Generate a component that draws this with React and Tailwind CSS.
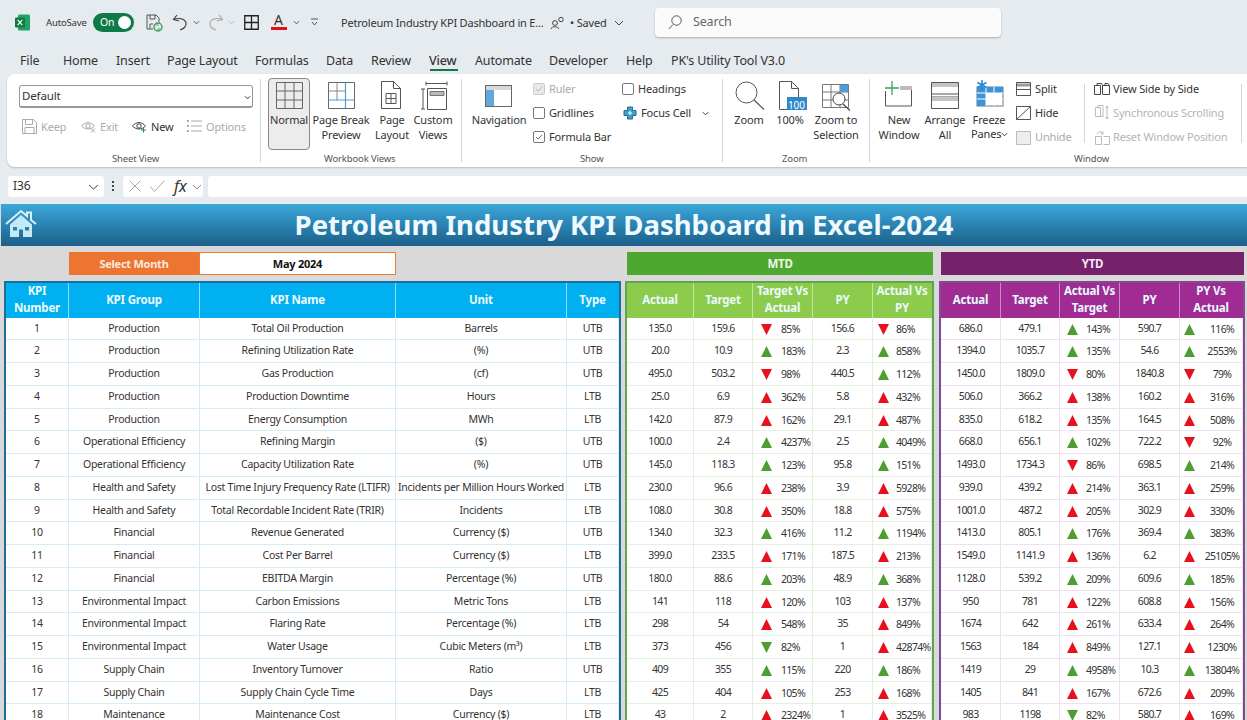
import React from "react";

const kpis = [
  [1,"Production","Total Oil Production","Barrels","UTB"],
  [2,"Production","Refining Utilization Rate","(%)","UTB"],
  [3,"Production","Gas Production","(cf)","UTB"],
  [4,"Production","Production Downtime","Hours","LTB"],
  [5,"Production","Energy Consumption","MWh","LTB"],
  [6,"Operational Efficiency","Refining Margin","($)","UTB"],
  [7,"Operational Efficiency","Capacity Utilization Rate","(%)","UTB"],
  [8,"Health and Safety","Lost Time Injury Frequency Rate (LTIFR)","Incidents per Million Hours Worked","LTB"],
  [9,"Health and Safety","Total Recordable Incident Rate (TRIR)","Incidents","LTB"],
  [10,"Financial","Revenue Generated","Currency ($)","UTB"],
  [11,"Financial","Cost Per Barrel","Currency ($)","LTB"],
  [12,"Financial","EBITDA Margin","Percentage (%)","UTB"],
  [13,"Environmental Impact","Carbon Emissions","Metric Tons","LTB"],
  [14,"Environmental Impact","Flaring Rate","Percentage (%)","LTB"],
  [15,"Environmental Impact","Water Usage","Cubic Meters (m³)","LTB"],
  [16,"Supply Chain","Inventory Turnover","Ratio","UTB"],
  [17,"Supply Chain","Supply Chain Cycle Time","Days","LTB"],
  [18,"Maintenance","Maintenance Cost","Currency ($)","LTB"],
];

const mtd = [
  ["135.0","159.6","d85","156.6","d86"],["20.0","10.9","u183","2.3","u858"],["495.0","503.2","d98","440.5","u112"],
  ["25.0","6.9","r362","5.8","r432"],["142.0","87.9","r162","29.1","r487"],["100.0","2.4","u4237","2.5","u4049"],
  ["145.0","118.3","u123","95.8","u151"],["230.0","96.6","r238","3.9","r5928"],["108.0","30.8","r350","18.8","r575"],
  ["134.0","32.3","u416","11.2","u1194"],["399.0","233.5","r171","187.5","r213"],["180.0","88.6","u203","48.9","u368"],
  ["141","118","r120","103","r137"],["298","54","r548","35","r849"],["373","456","g82","1","r42874"],
  ["409","355","u115","220","u186"],["425","404","r105","253","r168"],["43","2","r2324","1","r3525"],
];

const ytd = [
  ["686.0","479.1","u143","590.7","u116"],["1394.0","1035.7","u135","54.6","u2553"],["1450.0","1809.0","d80","1840.8","d79"],
  ["506.0","366.2","r138","160.2","r316"],["835.0","618.2","r135","164.5","r508"],["668.0","656.1","u102","722.2","d92"],
  ["1493.0","1734.3","d86","698.5","u214"],["939.0","439.2","r214","363.1","r259"],["1001.0","487.2","r205","302.9","r330"],
  ["1413.0","805.1","u176","369.4","u383"],["1549.0","1141.9","r136","6.2","r25105"],["1128.0","539.2","u209","609.6","u185"],
  ["950","781","r122","608.8","r156"],["1674","642","r261","633.4","r264"],["1563","184","r849","127.1","r1230"],
  ["1419","29","u4958","10.3","u13804"],["1405","841","r167","672.6","r209"],["983","1198","g82","580.7","r169"],
];

function Arrow({ code, className }) {
  const color = code === "u" || code === "g" ? "#4b9e2f" : "#e8101c";
  const pts = code === "u" || code === "r" ? "0,11 5.5,0 11,11" : "0,0 11,0 5.5,11";
  return (
    <svg viewBox="0 0 11 11" className={"absolute top-[6px] w-[11px] h-[11px] " + className}>
      <polygon points={pts} fill={color} />
    </svg>
  );
}

function Pct({ v, arrow, text, line }) {
  const code = v[0];
  return (
    <div className={"relative h-[22.75px] border-b border-r " + line}>
      <Arrow code={code} className={arrow} />
      <span className={"absolute top-[4px] leading-[14px] whitespace-nowrap " + text}>{v.slice(1)}%</span>
    </div>
  );
}

function Cell({ children, line }) {
  return (
    <div className={"h-[22.75px] flex items-center justify-center whitespace-nowrap border-b border-r " + line}>{children}</div>
  );
}

function Head({ children, line }) {
  return (
    <div className={"h-[34.5px] pb-[2px] flex items-center justify-center text-center leading-[17px] font-bold text-[11.5px] tracking-[-0.2px] text-[#eafaff] border-r " + line}>{children}</div>
  );
}

function Lbl({ className, children }) {
  return <div className={"absolute whitespace-nowrap leading-[14px] " + className}>{children}</div>;
}

function Stack({ className, a, b }) {
  return (
    <div className={"absolute top-[112px] -translate-x-1/2 text-center text-[11px] leading-[15px] text-[#333] whitespace-nowrap " + className}>
      <div>{a}</div>
      {b && <div>{b}</div>}
    </div>
  );
}

function Chev({ className, stroke = "#555" }) {
  return (
    <svg viewBox="0 0 8 5" className={"absolute w-[7px] h-[5px] " + className}>
      <path d="M1 1l3 3 3-3" fill="none" stroke={stroke} strokeWidth="1.1" />
    </svg>
  );
}

function Box({ className, checked, dim }) {
  return (
    <div className={"absolute w-[12px] h-[12px] rounded-[2px] border " + (dim ? "border-[#ccc] bg-[#e8e8e8] " : "border-[#777] bg-white ") + className}>
      {checked && (
        <svg viewBox="0 0 12 12" className="w-full h-full">
          <path d="M2.5 6l2.5 2.5 4.5-5" fill="none" stroke={dim ? "#aaa" : "#444"} strokeWidth="1" />
        </svg>
      )}
    </div>
  );
}

function Svg({ className, vb, children }) {
  return (
    <svg viewBox={vb} fill="none" className={"absolute " + className}>{children}</svg>
  );
}

function Ribbon() {
  return (
    <div className="absolute left-0 top-0 w-[1247px] h-[204px] bg-[#e6ebef] font-['Roboto',sans-serif] tracking-[-0.15px] text-[#333]">
      {/* Title bar */}
      <Svg className="left-[15px] top-[14px] w-[16px] h-[17px]" vb="0 0 16 17">
        <rect x="3" y="0.5" width="12" height="16" rx="1.5" fill="#21a366" />
        <rect x="0" y="3.5" width="10" height="10" rx="1" fill="#107c41" />
        <path d="M2.7 5.8l4.6 5.4M7.3 5.8l-4.6 5.4" stroke="#fff" strokeWidth="1.2" />
      </Svg>
      <Lbl className="left-[46px] top-[16px] text-[9.5px]">AutoSave</Lbl>
      <div className="absolute left-[93px] top-[13px] w-[41px] h-[19px] rounded-full bg-[#0e7a46] text-white text-[10.5px]">
        <span className="absolute left-[7px] top-[3px] leading-[13px]">On</span>
        <div className="absolute right-[3px] top-[3px] w-[13px] h-[13px] rounded-full bg-white" />
      </div>
      <Svg className="left-[146px] top-[14px] w-[17px] h-[18px]" vb="0 0 17 18">
        <path d="M1 1h9l3 3v4M1 1v14h6" stroke="#555" />
        <path d="M4 1v4h5V1M4 15v-5h3" stroke="#555" />
        <circle cx="12" cy="13" r="4" stroke="#3b9b5a" strokeWidth="1.4" />
        <path d="M9.5 11h3M14.5 15h-3" stroke="#3b9b5a" />
      </Svg>
      <Svg className="left-[172px] top-[14px] w-[16px] h-[17px]" vb="0 0 16 17">
        <path d="M5 1L1.5 5.5 7 7M2 5.5c5-2 11-1 12 3.5 .6 3-2 6-6 7" stroke="#444" strokeWidth="1.2" />
      </Svg>
      <Chev className="left-[193px] top-[20px]" />
      <Svg className="left-[208px] top-[14px] w-[16px] h-[17px]" vb="0 0 16 17">
        <path d="M11 1l3.5 4.5L9 7M14 5.5c-5-2-11-1-12 3.5-.6 3 2 6 6 7" stroke="#aaa" strokeWidth="1.2" />
      </Svg>
      <Chev className="left-[228px] top-[20px]" stroke="#bbb" />
      <Svg className="left-[244px] top-[15px] w-[15px] h-[15px]" vb="0 0 15 15">
        <path d="M.75.75h13.5v13.5H.75zM7.5.75v13.5M.75 7.5h13.5" stroke="#222" strokeWidth="1.3" />
      </Svg>
      <Lbl className="left-[274px] top-[13px] text-[14px] text-[#333]">A</Lbl>
      <div className="absolute left-[271px] top-[27px] w-[16px] h-[3px] bg-[#e3101c]" />
      <Chev className="left-[293px] top-[20px]" />
      <Svg className="left-[311px] top-[18px] w-[7px] h-[9px]" vb="0 0 7 9">
        <path d="M0 1h7M1 4l2.5 3L6 4" stroke="#555" />
      </Svg>
      <Lbl className="left-[341px] top-[16px] text-[11px] tracking-[-0.2px]">Petroleum Industry KPI Dashboard in E...</Lbl>
      <Svg className="left-[550px] top-[16px] w-[15px] h-[13px]" vb="0 0 15 13">
        <circle cx="5" cy="7" r="2.4" stroke="#444" />
        <path d="M1 13c.5-3 7-3 8 0" stroke="#444" />
        <circle cx="11" cy="3.5" r="2.2" stroke="#444" />
      </Svg>
      <Lbl className="left-[570px] top-[16px] text-[11px]">• Saved</Lbl>
      <Svg className="left-[614px] top-[20px] w-[10px] h-[6px]" vb="0 0 10 6">
        <path d="M1 1l4 4 4-4" stroke="#444" />
      </Svg>
      <div className="absolute left-[655px] top-[8px] w-[346px] h-[29px] rounded-[4px] bg-[#fbfbfb] shadow-[0_1px_2px_rgba(0,0,0,0.25)]">
        <Svg className="left-[13px] top-[7px] w-[14px] h-[15px]" vb="0 0 14 15">
          <circle cx="8.5" cy="5.5" r="4.7" stroke="#555" />
          <path d="M5 9.5L.8 14" stroke="#555" />
        </Svg>
        <Lbl className="left-[38px] top-[7px] text-[12.5px] text-[#666]">Search</Lbl>
      </div>

      {/* Tabs */}
      <div className="text-[12.5px] text-[#333]">
        <Lbl className="left-[20px] top-[54px]">File</Lbl>
        <Lbl className="left-[63px] top-[54px]">Home</Lbl>
        <Lbl className="left-[116px] top-[54px]">Insert</Lbl>
        <Lbl className="left-[167px] top-[54px]">Page Layout</Lbl>
        <Lbl className="left-[255px] top-[54px]">Formulas</Lbl>
        <Lbl className="left-[326px] top-[54px]">Data</Lbl>
        <Lbl className="left-[371px] top-[54px]">Review</Lbl>
        <Lbl className="left-[429px] top-[54px] font-medium">View</Lbl>
        <Lbl className="left-[475px] top-[54px]">Automate</Lbl>
        <Lbl className="left-[549px] top-[54px]">Developer</Lbl>
        <Lbl className="left-[626px] top-[54px]">Help</Lbl>
        <Lbl className="left-[671px] top-[54px]">PK's Utility Tool V3.0</Lbl>
      </div>
      <div className="absolute left-[430px] top-[69px] w-[28px] h-[2px] bg-[#0e7a46]" />

      {/* Ribbon body */}
      <div className="absolute left-[7px] top-[74px] w-[1240px] h-[93px] bg-white rounded-l-[8px] shadow-[0_1px_2px_rgba(0,0,0,0.2)]" />
      <div className="absolute left-[260px] top-[79px] w-px h-[83px] bg-[#d5d5d5]" />
      <div className="absolute left-[461px] top-[79px] w-px h-[83px] bg-[#d5d5d5]" />
      <div className="absolute left-[722px] top-[79px] w-px h-[83px] bg-[#d5d5d5]" />
      <div className="absolute left-[869px] top-[79px] w-px h-[83px] bg-[#d5d5d5]" />
      <div className="absolute left-[1084px] top-[84px] w-px h-[59px] bg-[#d5d5d5]" />
      <div className="absolute left-[1241px] top-[84px] w-px h-[59px] bg-[#d5d5d5]" />

      {/* Sheet view */}
      <div className="absolute left-[19px] top-[85px] w-[234px] h-[23px] border border-[#999] border-b-2 rounded-[3px] bg-white">
        <Lbl className="left-[2px] top-[3px] text-[11.5px]">Default</Lbl>
        <Chev className="left-[224px] top-[9px]" stroke="#333" />
      </div>
      <Svg className="left-[22px] top-[119px] w-[15px] h-[15px]" vb="0 0 15 15">
        <path d="M.5.5h11l3 3v11H.5zM3.5.5v5h7v-5M3 14.5v-6h9v6" stroke="#aaa" />
      </Svg>
      <Lbl className="left-[41px] top-[120px] text-[11px] text-[#aaa]">Keep</Lbl>
      <Svg className="left-[81px] top-[120px] w-[15px] h-[13px]" vb="0 0 15 13">
        <path d="M.5 6C4 1.5 10 1.5 13.5 6 10 10 4 10 .5 6z" stroke="#aaa" />
        <circle cx="7" cy="6" r="2.2" stroke="#aaa" />
        <path d="M10 8.5l4 4M14 8.5l-4 4" stroke="#aaa" />
      </Svg>
      <Lbl className="left-[100px] top-[120px] text-[11px] text-[#aaa]">Exit</Lbl>
      <Svg className="left-[132px] top-[120px] w-[15px] h-[13px]" vb="0 0 15 13">
        <path d="M.5 6C4 1.5 10 1.5 13.5 6 10 10 4 10 .5 6z" stroke="#444" />
        <circle cx="7" cy="6" r="2.2" stroke="#444" />
        <path d="M11.5 7.5v5M9 10h5" stroke="#2d8b57" />
      </Svg>
      <Lbl className="left-[151px] top-[120px] text-[11px]">New</Lbl>
      <Svg className="left-[187px] top-[120px] w-[15px] h-[12px]" vb="0 0 15 12">
        <path d="M4 1h11M4 6h11M4 11h11" stroke="#aaa" />
        <path d="M0 1h2M0 6h2M0 11h2" stroke="#aaa" strokeWidth="2" />
      </Svg>
      <Lbl className="left-[206px] top-[120px] text-[11px] text-[#aaa]">Options</Lbl>
      <Lbl className="left-[112px] top-[152px] text-[9.5px] text-[#555]">Sheet View</Lbl>

      {/* Workbook views */}
      <div className="absolute left-[268px] top-[78px] w-[42px] h-[72px] rounded-[4px] border border-[#888] bg-[#ececec]" />
      <Svg className="left-[276px] top-[82px] w-[27px] h-[27px]" vb="0 0 27 27">
        <path d="M.5.5h26v26H.5zM9 .5v26M18 .5v26M.5 9h26M.5 18h26" stroke="#666" />
      </Svg>
      <Svg className="left-[328px] top-[82px] w-[27px] h-[27px]" vb="0 0 27 27">
        <path d="M.5.5h26v26H.5z" stroke="#666" />
        <path d="M9 .5v18M.5 9h17" stroke="#888" />
        <path d="M17.5.5v26M.5 18h26" stroke="#4a9fd6" strokeWidth="1.2" />
      </Svg>
      <Svg className="left-[381px] top-[81px] w-[20px] h-[28px]" vb="0 0 20 28">
        <path d="M.5.5h12l7 7v20H.5zM12.5.5v7h7" stroke="#555" />
        <path d="M5 12.5h10v10H5zM10 12.5v10M5 17.5h10" stroke="#555" />
      </Svg>
      <Svg className="left-[420px] top-[81px] w-[28px] h-[29px]" vb="0 0 28 29">
        <path d="M6 2.5h21M6 .5v4M27 .5v4M1 8h4M3 8v20M1 28h4" stroke="#555" />
        <path d="M7.5 7.5h19v21h-19z" stroke="#555" />
        <path d="M10 10.5h14v4H10z" fill="#bbb" stroke="#777" />
      </Svg>
      <Stack className="left-[289px]" a="Normal" />
      <Stack className="left-[341px]" a="Page Break" b="Preview" />
      <Stack className="left-[392px]" a="Page" b="Layout" />
      <Stack className="left-[433px]" a="Custom" b="Views" />
      <Lbl className="left-[324px] top-[152px] text-[9.5px] text-[#555]">Workbook Views</Lbl>

      {/* Show */}
      <Svg className="left-[485px] top-[85px] w-[27px] h-[22px]" vb="0 0 27 22">
        <rect x=".5" y=".5" width="26" height="21" stroke="#666" fill="#fff" />
        <rect x="1" y="1" width="25" height="4" fill="#d8d8d8" />
        <rect x="1" y="5" width="8" height="16" fill="#62a8dc" />
      </Svg>
      <Stack className="left-[499px]" a="Navigation" />
      <Box className="left-[533px] top-[83px]" checked dim />
      <Lbl className="left-[549px] top-[82px] text-[11px] text-[#aaa]">Ruler</Lbl>
      <Box className="left-[533px] top-[107px]" />
      <Lbl className="left-[549px] top-[106px] text-[11px]">Gridlines</Lbl>
      <Box className="left-[533px] top-[131px]" checked />
      <Lbl className="left-[549px] top-[130px] text-[11px]">Formula Bar</Lbl>
      <Box className="left-[622px] top-[83px]" />
      <Lbl className="left-[638px] top-[82px] text-[11px]">Headings</Lbl>
      <Svg className="left-[623px] top-[106px] w-[14px] h-[14px]" vb="0 0 14 14">
        <path d="M4.5 1h5v3.5H13v5H9.5V13h-5V9.5H1v-5h3.5z" fill="#3f9fc8" stroke="#1f6f96" />
        <path d="M5 7h4M7 5v4" stroke="#fff" />
      </Svg>
      <Lbl className="left-[641px] top-[106px] text-[11px]">Focus Cell</Lbl>
      <Chev className="left-[702px] top-[111px]" stroke="#333" />
      <Lbl className="left-[580px] top-[152px] text-[9.5px] text-[#555]">Show</Lbl>

      {/* Zoom */}
      <Svg className="left-[735px] top-[81px] w-[30px] h-[29px]" vb="0 0 30 29">
        <circle cx="11.5" cy="11.5" r="10.5" stroke="#555" />
        <path d="M19 19l10 9.5" stroke="#555" strokeWidth="1.2" />
      </Svg>
      <Stack className="left-[749px]" a="Zoom" />
      <Svg className="left-[779px] top-[81px] w-[28px] h-[29px]" vb="0 0 28 29">
        <path d="M.5 28V.5h12l7 7V16M12.5.5v7h7M.5 28.5H8" stroke="#555" />
        <rect x="8" y="16" width="20" height="13" fill="#2f88cc" />
      </Svg>
      <Lbl className="left-[788px] top-[98px] text-[10px] text-white">100</Lbl>
      <Stack className="left-[790px]" a="100%" />
      <Svg className="left-[822px] top-[84px] w-[30px] h-[27px]" vb="0 0 30 27">
        <path d="M.5.5h26v23H.5zM9 .5v23M18 .5v23M.5 8h26M.5 16h26" stroke="#777" />
        <rect x="18" y="1" width="8" height="7" fill="#4d9fd9" />
        <circle cx="17" cy="15" r="6" fill="#fff" stroke="#444" />
        <path d="M21 20l7 6.5" stroke="#444" strokeWidth="1.2" />
      </Svg>
      <Stack className="left-[836px]" a="Zoom to" b="Selection" />
      <Lbl className="left-[782px] top-[152px] text-[9.5px] text-[#555]">Zoom</Lbl>

      {/* Window */}
      <Svg className="left-[884px] top-[81px] w-[29px] h-[26px]" vb="0 0 29 26">
        <path d="M1.5 10v15h26V5.5H19" stroke="#555" />
        <rect x="16" y="5" width="12" height="4" fill="#bbb" />
        <path d="M8 0v14M1 7h14" stroke="#36a35c" strokeWidth="1.3" />
      </Svg>
      <Stack className="left-[899px]" a="New" b="Window" />
      <Svg className="left-[931px] top-[82px] w-[28px] h-[27px]" vb="0 0 28 27">
        <path d="M.5.5h27v26H.5zM.5 12h27M.5 15h27" stroke="#555" />
        <rect x="1" y="1" width="26" height="4" fill="#c4c4c4" />
        <rect x="1" y="15" width="26" height="4" fill="#c4c4c4" />
      </Svg>
      <Stack className="left-[945px]" a="Arrange" b="All" />
      <Svg className="left-[975px] top-[80px] w-[29px] h-[27px]" vb="0 0 29 27">
        <rect x="2" y="7" width="26" height="19" fill="#fff" stroke="#777" />
        <rect x="2" y="7" width="26" height="6" fill="#3b93da" />
        <rect x="2" y="7" width="9" height="19" fill="#3b93da" />
        <rect x="11" y="13" width="8" height="6" fill="#fff" />
        <path d="M11 7v19M19 7v19M2 13h26M2 19h26" stroke="#fff" />
        <path d="M7 0v10M2.5 2.5l9 5M11.5 2.5l-9 5" stroke="#2a8ad4" strokeWidth="1.6" />
      </Svg>
      <Stack className="left-[989px]" a="Freeze" />
      <Lbl className="left-[971px] top-[127px] text-[11px]">Panes</Lbl>
      <Chev className="left-[1001px] top-[132px]" stroke="#333" />
      <Svg className="left-[1016px] top-[82px] w-[15px] h-[14px]" vb="0 0 15 14">
        <path d="M.5.5h14v13H.5z" stroke="#555" />
        <path d="M1 3h13" stroke="#999" strokeWidth="3" />
        <path d="M.5 7.5h14" stroke="#555" />
      </Svg>
      <Lbl className="left-[1035px] top-[82px] text-[11px]">Split</Lbl>
      <Svg className="left-[1016px] top-[106px] w-[15px] h-[14px]" vb="0 0 15 14">
        <path d="M.5.5h14v13H.5zM.5 13.5l14-13" stroke="#555" />
      </Svg>
      <Lbl className="left-[1035px] top-[106px] text-[11px]">Hide</Lbl>
      <Svg className="left-[1016px] top-[131px] w-[15px] h-[14px]" vb="0 0 15 14">
        <path d="M.5.5h14v13H.5z" stroke="#bbb" fill="#eee" />
      </Svg>
      <Lbl className="left-[1035px] top-[130px] text-[11px] text-[#aaa]">Unhide</Lbl>
      <Svg className="left-[1094px] top-[83px] w-[16px] h-[12px]" vb="0 0 16 12">
        <path d="M.5 2.500h6v9h-6zM3 2.500V.5h4.500l1 2v9M9 11.500h6.500v-9h-7M11 2.500V.5h3l1.500 2" stroke="#444" />
      </Svg>
      <Lbl className="left-[1113px] top-[82px] text-[11px]">View Side by Side</Lbl>
      <Svg className="left-[1095px] top-[105px] w-[15px] h-[15px]" vb="0 0 15 15">
        <path d="M.5 2.500h5v9h-5zM3 2.500V.5h5v11H5M12 1v13M10.500 3L12 1l1.500 2M10.500 12l1.500 2 1.500-2" stroke="#bbb" />
      </Svg>
      <Lbl className="left-[1113px] top-[106px] text-[11px] text-[#b4b4b4]">Synchronous Scrolling</Lbl>
      <Svg className="left-[1095px] top-[130px] w-[15px] h-[15px]" vb="0 0 15 15">
        <path d="M.5 6.500h6v8h-6zM8.500 14.500h6v-8h-6M2 4C3 1 7 1 8 4M8 1.500V4H5.500" stroke="#bbb" />
      </Svg>
      <Lbl className="left-[1113px] top-[130px] text-[11px] text-[#b4b4b4]">Reset Window Position</Lbl>
      <Lbl className="left-[1074px] top-[152px] text-[9.5px] text-[#555]">Window</Lbl>

      {/* Formula bar */}
      <div className="absolute left-[8px] top-[176px] w-[96px] h-[21px] rounded-[3px] bg-white">
        <Lbl className="left-[5px] top-[3px] text-[12px]">I36</Lbl>
        <Svg className="left-[80px] top-[8px] w-[11px] h-[6px]" vb="0 0 11 6"><path d="M1 1l4.500 4L10 1" stroke="#444" /></Svg>
      </div>
      <div className="absolute left-[112px] top-[181px] w-[2px] h-[2px] bg-[#444]" />
      <div className="absolute left-[112px] top-[185px] w-[2px] h-[2px] bg-[#444]" />
      <div className="absolute left-[112px] top-[189px] w-[2px] h-[2px] bg-[#444]" />
      <div className="absolute left-[123px] top-[176px] w-[80px] h-[21px] rounded-[3px] bg-white" />
      <Svg className="left-[129px] top-[180px] w-[12px] h-[12px]" vb="0 0 12 12"><path d="M.5.5l11 11M11.500.5l-11 11" stroke="#aaa" /></Svg>
      <Svg className="left-[150px] top-[180px] w-[15px] h-[12px]" vb="0 0 15 12"><path d="M.5 6.500l4 5L14.500.5" stroke="#aaa" /></Svg>
      <Lbl className="left-[174px] top-[179px] text-[16px] italic font-['Liberation_Serif',serif]">fx</Lbl>
      <Svg className="left-[192px] top-[184px] w-[10px] h-[6px]" vb="0 0 10 6"><path d="M1 1l4 4 4-4" stroke="#888" /></Svg>
      <div className="absolute left-[208px] top-[176px] w-[1039px] h-[21px] rounded-l-[3px] bg-white" />
    </div>
  );
}

function Dashboard() {
  const blue = "border-[#d3ecf6]";
  const green = "border-[#e4efdf]";
  const purple = "border-[#efdff0]";
  const hBlue = "border-[#8fdcf7]";
  const hGreen = "border-[#c3e69c]";
  const hPurple = "border-[#c98cc2]";
  return (
    <div className="absolute left-0 top-[204px] w-[1247px] h-[516px] bg-[#d9d9d9] font-['Roboto',sans-serif] text-[10.5px] tracking-[-0.25px] text-[#333]">
      <div className="absolute left-[1px] top-0 w-[1246px] h-[42px] bg-gradient-to-b from-[#3ba8da] to-[#1c5f8a] flex items-center justify-center">
        <span className="font-['Liberation_Sans',sans-serif] font-bold text-[27.5px] tracking-normal text-[#eefaff] leading-none">Petroleum Industry KPI Dashboard in Excel-2024</span>
      </div>
      <svg viewBox="0 0 32 29" className="absolute left-[5px] top-[5px] w-[32px] h-[29px]">
        <path d="M1 15L16 2l6 5V3.500h4V11l5 4" fill="none" stroke="#d7f1fb" strokeWidth="2" />
        <path d="M5 15.500L16 6l11 9.500V28H18v-7.500h-4V28H5z" fill="#c4e9f7" />
        <rect x="8" y="18" width="4" height="3.500" fill="#2d7ea9" />
        <rect x="20" y="18" width="4" height="3.500" fill="#2d7ea9" />
      </svg>

      <div className="absolute left-[69px] top-[48px] w-[130px] h-[23px] pt-[1px] bg-[#ed7431] text-[#fbe9dd] text-[11px] font-bold flex items-center justify-center">Select Month</div>
      <div className="absolute left-[199px] top-[48px] w-[197px] h-[23px] pt-[1px] bg-white border border-[#ed7d31] text-[#111] text-[11px] font-bold flex items-center justify-center">May 2024</div>
      <div className="absolute left-[627px] top-[48px] w-[306px] h-[23px] pt-[1px] bg-[#4ea72e] text-[#eef8e8] text-[11.5px] font-bold flex items-center justify-center">MTD</div>
      <div className="absolute left-[941px] top-[48px] w-[303px] h-[23px] pt-[1px] bg-[#74206b] text-[#f6e6f4] text-[11.5px] font-bold flex items-center justify-center">YTD</div>

      {/* KPI table */}
      <div className="absolute left-[4px] top-[77px] w-[617px] h-[460px] border-2 border-[#1f6e9a] bg-white">
        <div className="grid grid-cols-[63px_131px_196px_171px_52px] bg-[#00b0f0]">
          <Head line={hBlue}>KPI<br />Number</Head>
          <Head line={hBlue}>KPI Group</Head>
          <Head line={hBlue}>KPI Name</Head>
          <Head line={hBlue}>Unit</Head>
          <Head line="border-transparent">Type</Head>
        </div>
        <div className="grid grid-cols-[63px_131px_196px_171px_52px]">
          {kpis.map((r) =>
            r.map((c, i) => <Cell key={r[0] + "-" + i} line={blue}>{c}</Cell>)
          )}
        </div>
      </div>

      {/* MTD table */}
      <div className="absolute left-[625px] top-[77px] w-[309px] h-[460px] border-2 border-[#5fa652] bg-white">
        <div className="grid grid-cols-[67px_59px_60px_60px_59px] bg-[#8ccb4c]">
          <Head line={hGreen}>Actual</Head>
          <Head line={hGreen}>Target</Head>
          <Head line={hGreen}>Target Vs<br />Actual</Head>
          <Head line={hGreen}>PY</Head>
          <Head line="border-transparent">Actual Vs<br />PY</Head>
        </div>
        <div className="grid grid-cols-[67px_59px_60px_60px_59px] tracking-[-0.7px]">
          {mtd.map((r, k) => (
            <React.Fragment key={k}>
              <Cell line={green}>{r[0]}</Cell>
              <Cell line={green}>{r[1]}</Cell>
              <Pct v={r[2]} line={green} arrow="left-[8px]" text="left-[28px]" />
              <Cell line={green}>{r[3]}</Cell>
              <Pct v={r[4]} line={green} arrow="left-[5px]" text="left-[23px]" />
            </React.Fragment>
          ))}
        </div>
      </div>

      {/* YTD table */}
      <div className="absolute left-[939px] top-[77px] w-[306px] h-[460px] border-2 border-[#7f4a92] bg-white">
        <div className="grid grid-cols-[60px_59px_60px_60px_63px] bg-[#a02b93]">
          <Head line={hPurple}>Actual</Head>
          <Head line={hPurple}>Target</Head>
          <Head line={hPurple}>Actual Vs<br />Target</Head>
          <Head line={hPurple}>PY</Head>
          <Head line="border-transparent">PY Vs<br />Actual</Head>
        </div>
        <div className="grid grid-cols-[60px_59px_60px_60px_63px] tracking-[-0.7px]">
          {ytd.map((r, k) => (
            <React.Fragment key={k}>
              <Cell line={purple}>{r[0]}</Cell>
              <Cell line={purple}>{r[1]}</Cell>
              <Pct v={r[2]} line={purple} arrow="left-[7px]" text="left-[26px]" />
              <Cell line={purple}>{r[3]}</Cell>
              <Pct v={r[4]} line={purple} arrow="left-[4px]" text="left-[42px] -translate-x-1/2" />
            </React.Fragment>
          ))}
        </div>
      </div>
    </div>
  );
}

export default function App() {
  return (
    <div className="relative w-[1247px] h-[720px] overflow-hidden bg-white">
      <Ribbon />
      <Dashboard />
    </div>
  );
}
